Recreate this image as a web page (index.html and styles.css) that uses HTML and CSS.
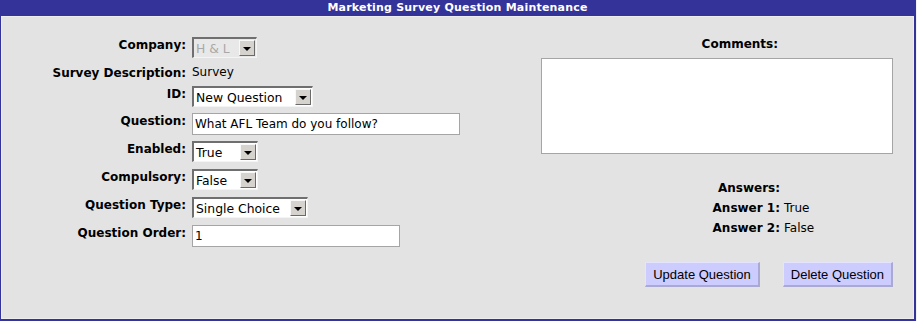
FILE: index.html
```html
<!DOCTYPE html>
<html lang="en">
<head>
    <meta charset="UTF-8">
    <title>Marketing Survey Question Maintenance</title>
    <link rel="stylesheet" href="styles.css">
</head>
<body>
    <div class="panel">
        <!-- Title Bar -->
        <div class="title">Marketing Survey Question Maintenance</div>

        <div class="content">
            <!-- Question Details -->
            <div class="form">
                <label>Company:</label>
                <div class="combo combo-company disabled">
                    <span class="combo-text">H &amp; L</span>
                    <span class="combo-btn"></span>
                </div>

                <label>Survey Description:</label>
                <span class="value">Survey</span>

                <label>ID:</label>
                <div class="combo combo-id">
                    <span class="combo-text">New Question</span>
                    <span class="combo-btn"></span>
                </div>

                <label>Question:</label>
                <input class="field field-question" type="text" value="What AFL Team do you follow?">

                <label>Enabled:</label>
                <div class="combo combo-bool">
                    <span class="combo-text">True</span>
                    <span class="combo-btn"></span>
                </div>

                <label>Compulsory:</label>
                <div class="combo combo-bool">
                    <span class="combo-text">False</span>
                    <span class="combo-btn"></span>
                </div>

                <label>Question Type:</label>
                <div class="combo combo-type">
                    <span class="combo-text">Single Choice</span>
                    <span class="combo-btn"></span>
                </div>

                <label>Question Order:</label>
                <input class="field field-order" type="text" value="1">
            </div>

            <!-- Comments and Answers -->
            <div class="side">
                <div class="comments-label">Comments:</div>
                <textarea class="comments"></textarea>

                <div class="answers">
                    <span class="answer-label">Answers:</span><span></span>
                    <span class="answer-label">Answer 1:</span><span>True</span>
                    <span class="answer-label">Answer 2:</span><span>False</span>
                </div>

                <div class="actions">
                    <button class="btn">Update Question</button>
                    <button class="btn">Delete Question</button>
                </div>
            </div>
        </div>
    </div>
</body>
</html>
```
FILE: styles.css
```css
/* Base */
* {
    box-sizing: border-box;
}

body {
    margin: 0;
    background: #f2f2fa;
    font-family: "DejaVu Sans", Verdana, sans-serif;
    font-size: 12px;
    color: #000;
}

/* Panel */
.panel {
    width: 916px;
    height: 321px;
    border-left: 1px solid #333399;
    border-right: 2px solid #333399;
    border-bottom: 2px solid #333399;
}

.title {
    height: 16px;
    line-height: 16px;
    background: #333399;
    color: #fff;
    font-size: 11px;
    font-weight: bold;
    letter-spacing: 0.2px;
    text-align: center;
}

.content {
    display: flex;
    height: 303px;
    padding-top: 20px;
    background: #e3e3e3;
    border: 1px solid #ededed;
}

/* Left Form */
.form {
    width: 539px;
    display: grid;
    grid-template-columns: 184px auto;
    grid-template-rows: 22px 15px 21px 22px 22px 22px 22px 22px;
    column-gap: 6px;
    row-gap: 6px;
    align-content: start;
    align-items: start;
}

.form label {
    font-weight: bold;
    text-align: right;
    line-height: 15px;
    padding-top: 1px;
}

.value {
    line-height: 15px;
}

/* Dropdowns */
.combo {
    display: flex;
    align-items: center;
    height: 21px;
    background: #fff;
    border-style: solid;
    border-width: 2px 1px 1px 2px;
    border-color: #6f6f6f #f4f4f4 #f4f4f4 #6f6f6f;
    padding-right: 1px;
}

.combo-text {
    flex: 1;
    padding-left: 2px;
    font-size: 12.4px;
    white-space: nowrap;
}

.combo.disabled {
    background: #e8e8e8;
}

.combo.disabled .combo-text {
    color: #a8a8a8;
}

.combo-btn {
    width: 16px;
    height: 16px;
    background: #d6d3ce;
    border-style: solid;
    border-width: 1px;
    border-color: #f8f8f8 #6a6a6a #6a6a6a #f8f8f8;
    display: flex;
    align-items: center;
    justify-content: center;
}

.combo-btn::after {
    content: "";
    border-left: 4px solid transparent;
    border-right: 4px solid transparent;
    border-top: 4px solid #000;
    margin-top: 1px;
}

.combo-company { width: 65px; }
.combo-id { width: 121px; }
.combo-bool { width: 66px; }
.combo-type { width: 116px; }

/* Text Inputs */
.field {
    height: 22px;
    margin: 0;
    padding: 0 2px;
    border: 1px solid #a5a5a5;
    background: #fff;
    font-family: "DejaVu Sans", Verdana, sans-serif;
    font-size: 12px;
}

.field-question { width: 268px; }
.field-order { width: 208px; }

/* Right Side */
.side {
    width: 352px;
    display: flex;
    flex-direction: column;
}

.comments-label {
    font-weight: bold;
    line-height: 15px;
    text-align: right;
    padding-right: 115px;
}

.comments {
    height: 96px;
    margin-top: 6px;
    border: 1px solid #a5a5a5;
    background: #fff;
    resize: none;
}

.answers {
    display: grid;
    grid-template-columns: 1fr 109px;
    column-gap: 4px;
    grid-auto-rows: 20px;
    line-height: 20px;
    margin-top: 24px;
}

.answer-label {
    font-weight: bold;
    text-align: right;
}

/* Buttons */
.actions {
    display: flex;
    justify-content: flex-end;
    gap: 23px;
    margin-top: 24px;
}

.btn {
    height: 25px;
    padding: 0 7px;
    background: #ccccff;
    border-style: solid;
    border-width: 1px 2px 2px 1px;
    border-color: #e4e4ff #a9a9d4 #a9a9d4 #e4e4ff;
    font-family: "Liberation Sans", Arial, sans-serif;
    font-size: 13px;
    color: #000;
}
```
